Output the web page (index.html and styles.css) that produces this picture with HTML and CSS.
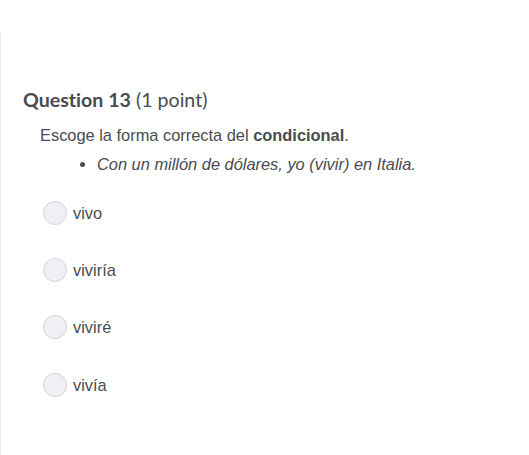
FILE: index.html
```html
<!DOCTYPE html>
<html lang="es">
<head>
<meta charset="utf-8">
<link rel="stylesheet" href="styles.css">
</head>
<body>
<div class="page">
  <div class="question">
    <h2 class="q-title"><strong>Question 13</strong> <span class="pts">(1 point)</span></h2>
    <div class="q-text">
      <p class="prompt">Escoge la forma correcta del <strong>condicional</strong>.</p>
      <ul class="sentence">
        <li><em>Con un millón de dólares, yo (vivir) en Italia.</em></li>
      </ul>
    </div>
    <div class="options">
      <label class="opt"><span class="radio"></span><span class="opt-label">vivo</span></label>
      <label class="opt"><span class="radio"></span><span class="opt-label">viviría</span></label>
      <label class="opt"><span class="radio"></span><span class="opt-label">viviré</span></label>
      <label class="opt"><span class="radio"></span><span class="opt-label">vivía</span></label>
    </div>
  </div>
</div>
</body>
</html>
```
FILE: styles.css
```css
html, body {
  margin: 0;
  padding: 0;
  background: #fff;
}
.page {
  margin-top: 33px;
  height: 422px;
  border-left: 1px solid #ececec;
  box-sizing: border-box;
}
.question {
  padding: 55px 0 0 22px;
  color: #494c4e;
}
.q-title {
  margin: 0;
  font-family: Lato, "Liberation Sans", sans-serif;
  font-size: 19.6px;
  line-height: 24px;
  font-weight: normal;
  color: #494c4e;
  font-variant-ligatures: none;
}
.q-title strong {
  font-weight: bold;
}
.q-text {
  font-family: "Liberation Sans", Arial, sans-serif;
  font-size: 16.4px;
  color: #494c4e;
  padding-left: 17px;
}
.prompt {
  margin: 13px 0 0 0;
  line-height: 20px;
}
.sentence {
  margin: 9px 0 0 0;
  padding-left: 57px;
  line-height: 20px;
}
.options {
  display: flex;
  flex-direction: column;
  gap: 33px;
  margin-top: 27px;
  padding-left: 20px;
}
.opt {
  display: flex;
  align-items: center;
  gap: 6px;
  height: 24px;
  font-family: "Liberation Sans", Arial, sans-serif;
  font-size: 16.4px;
  color: #494c4e;
}
.opt:nth-child(4) {
  margin-top: 1px;
}
.radio {
  width: 22px;
  height: 22px;
  border-radius: 50%;
  border: 1px solid #d3d5d9;
  background: #eef0f3;
  flex: none;
}
```
